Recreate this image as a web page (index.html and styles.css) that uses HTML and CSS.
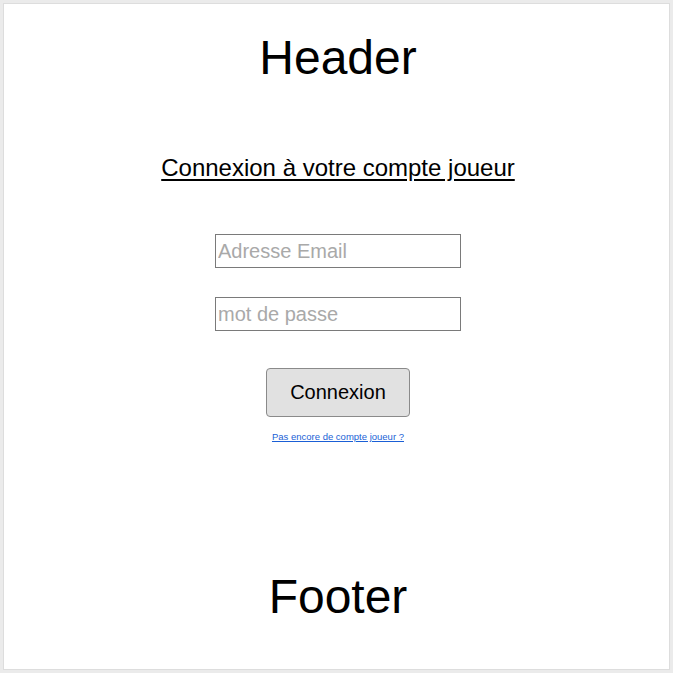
FILE: index.html
```html
<!DOCTYPE html>
<html lang="fr">
<head>
<meta charset="utf-8">
<title>Connexion</title>
<link rel="stylesheet" href="styles.css">
</head>
<body>
<div class="frame">
  <header class="site-header">Header</header>
  <main class="login">
    <h2 class="login-title">Connexion à votre compte joueur</h2>
    <form class="login-form">
      <input class="field field-email" type="email" placeholder="Adresse Email">
      <input class="field field-pass" type="password" placeholder="mot de passe">
      <button class="submit" type="button">Connexion</button>
      <a class="signup" href="#">Pas encore de compte joueur ?</a>
    </form>
  </main>
  <footer class="site-footer">Footer</footer>
</div>
</body>
</html>
```
FILE: styles.css
```css
html, body {
  margin: 0;
  padding: 0;
  background: #ffffff;
}
body {
  font-family: "Liberation Sans", Arial, sans-serif;
  color: #000;
}
.frame {
  box-sizing: border-box;
  width: 673px;
  height: 673px;
  border: 3px solid #ebebeb;
  box-shadow: inset 0 0 0 1px #dddddd;
  padding-left: 3px;
  display: flex;
  flex-direction: column;
  align-items: center;
}
.site-header,
.site-footer {
  font-size: 48px;
  line-height: 55px;
  text-align: center;
}
.site-header {
  margin-top: 27px;
}
.site-footer {
  margin-top: auto;
  margin-bottom: 46px;
}
.login {
  display: flex;
  flex-direction: column;
  align-items: center;
  margin-top: 69px;
}
.login-title {
  margin: 0;
  font-size: 24px;
  line-height: 28px;
  font-weight: normal;
  text-decoration: underline;
  text-underline-offset: 3px;
}
.login-form {
  display: flex;
  flex-direction: column;
  align-items: center;
  margin-top: 52px;
}
.field {
  box-sizing: border-box;
  width: 246px;
  height: 34px;
  border: 1px solid #7a7a7a;
  border-radius: 0;
  padding: 0 2px;
  font-family: "Liberation Sans", Arial, sans-serif;
  font-size: 20px;
  color: #000;
  background: #fff;
  outline: none;
}
.field::placeholder {
  color: #a9a9a9;
}
.field-pass {
  margin-top: 29px;
}
.submit {
  box-sizing: border-box;
  width: 144px;
  height: 49px;
  margin-top: 37px;
  background: #e1e1e1;
  border: 1px solid #8a8a8a;
  border-radius: 4px;
  font-family: "Liberation Sans", Arial, sans-serif;
  font-size: 20px;
  color: #000;
  padding: 0;
}
.signup {
  margin-top: 14px;
  font-size: 9.5px;
  line-height: 12px;
  color: #1a5fd6;
  text-decoration: underline;
}
```
